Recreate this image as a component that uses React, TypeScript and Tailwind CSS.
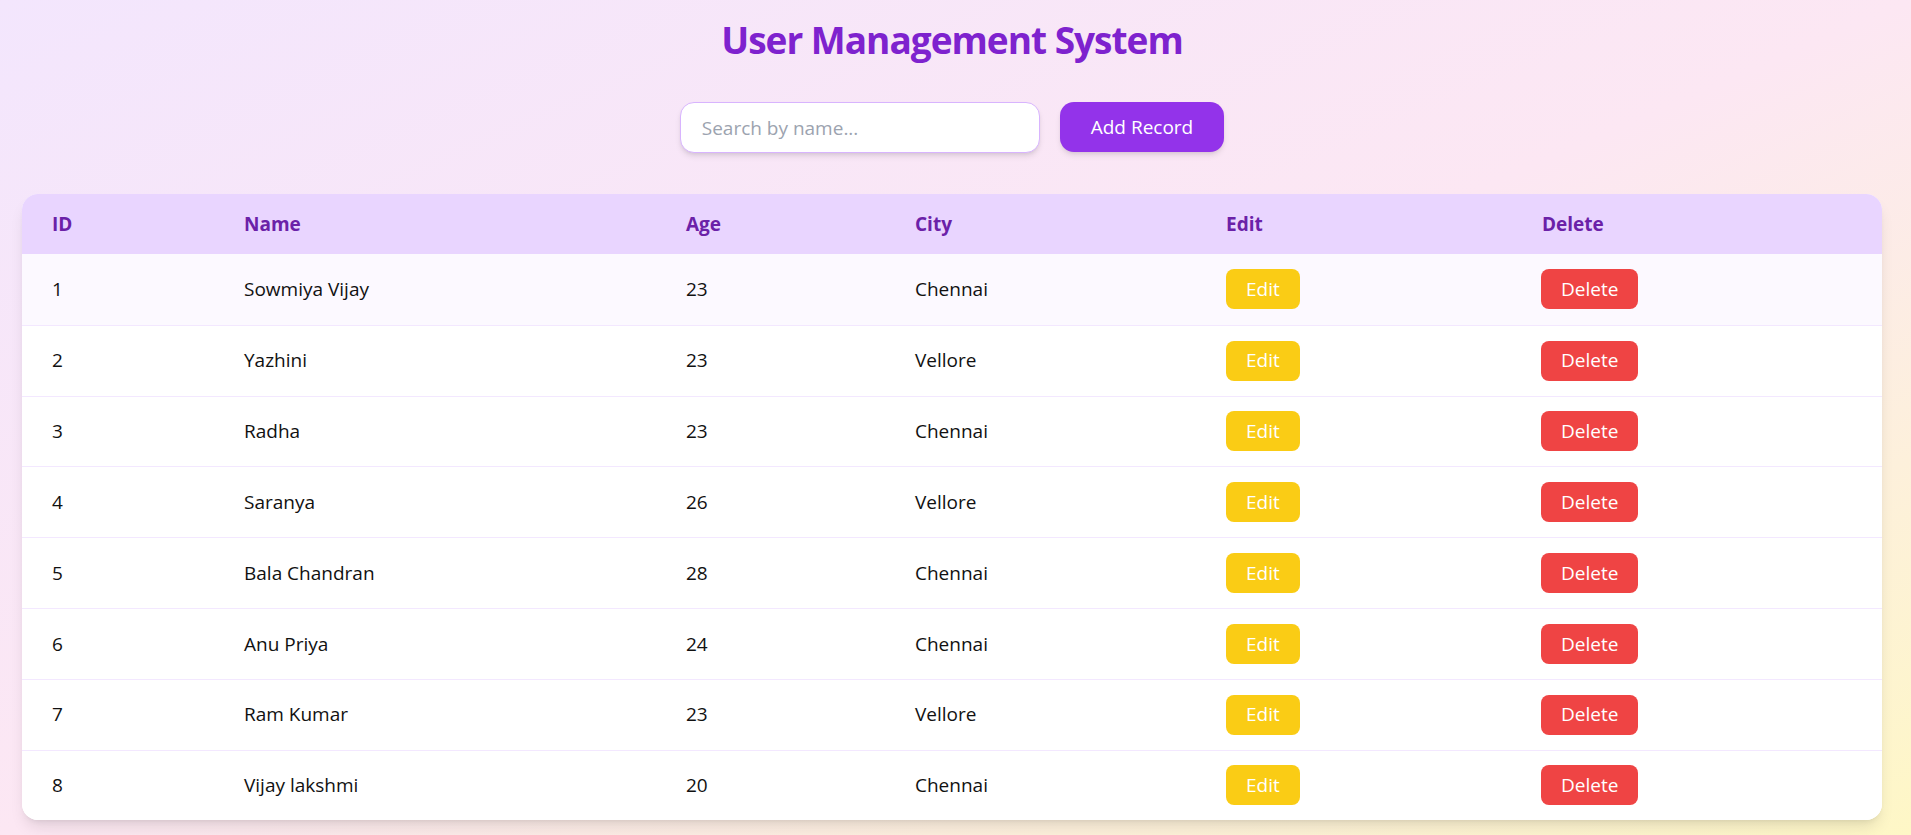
const users = [
  { id: 1, name: "Sowmiya Vijay", age: 23, city: "Chennai" },
  { id: 2, name: "Yazhini", age: 23, city: "Vellore" },
  { id: 3, name: "Radha", age: 23, city: "Chennai" },
  { id: 4, name: "Saranya", age: 26, city: "Vellore" },
  { id: 5, name: "Bala Chandran", age: 28, city: "Chennai" },
  { id: 6, name: "Anu Priya", age: 24, city: "Chennai" },
  { id: 7, name: "Ram Kumar", age: 23, city: "Vellore" },
  { id: 8, name: "Vijay lakshmi", age: 20, city: "Chennai" },
];

const cols = "grid grid-cols-[192px_442px_229px_311px_316px_1fr]";

export default function App() {
  return (
    <div className="min-h-screen bg-gradient-to-br from-[#f3e6fd] via-[#fce7f3] to-[#fef7c6] font-['Open_Sans',sans-serif] pl-[22px] pr-[29px] pt-[17px] pb-[15px]">
      {/* Title */}
      <h1 className="text-center text-[37px] leading-[46px] font-bold text-[#7e22ce] tracking-[-1px]">
        User Management System
      </h1>

      {/* Search + add */}
      <div className="mt-[39px] flex justify-center gap-5">
        <input
          type="text"
          placeholder="Search by name..."
          className="w-[360px] h-[51px] rounded-[14px] border border-[#d8b4fe] bg-white px-[21px] text-[19px] text-gray-800 placeholder:text-[#9ca3af] shadow-md outline-none"
        />
        <button className="h-[50px] px-[31px] rounded-[14px] bg-[#9333ea] text-white text-[19px] shadow-md">
          Add Record
        </button>
      </div>

      {/* Table */}
      <div className="mt-[41px] bg-white rounded-2xl overflow-hidden shadow-lg">
        <div className={`${cols} h-[60px] items-center bg-[#e9d5ff] text-[#6b21a8] font-bold text-[19px]`}>
          <div className="pl-[30px]">ID</div>
          <div className="pl-[30px]">Name</div>
          <div className="pl-[30px]">Age</div>
          <div className="pl-[30px]">City</div>
          <div className="pl-[30px]">Edit</div>
          <div className="pl-[30px]">Delete</div>
        </div>

        {users.map((u, i) => (
          <div
            key={u.id}
            className={`${cols} h-[70.8px] items-center text-[19px] text-[#111] ${
              i > 0 ? "border-t border-[#f3e8ff]" : ""
            } ${i === 0 ? "bg-[#fcf9ff]" : "bg-white"}`}
          >
            <div className="pl-[30px]">{u.id}</div>
            <div className="pl-[30px]">{u.name}</div>
            <div className="pl-[30px]">{u.age}</div>
            <div className="pl-[30px]">{u.city}</div>
            <div className="pl-[30px]">
              <button className="h-10 px-5 rounded-lg bg-[#facc15] text-white text-[19px]">
                Edit
              </button>
            </div>
            <div className="pl-[29px]">
              <button className="h-10 px-5 rounded-lg bg-[#ef4444] text-white text-[19px]">
                Delete
              </button>
            </div>
          </div>
        ))}
      </div>
    </div>
  );
}
